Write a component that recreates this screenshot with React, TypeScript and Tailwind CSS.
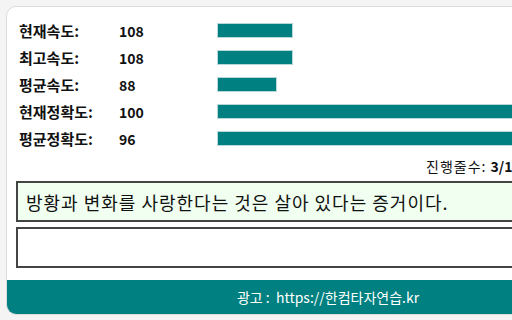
import React from "react";

const rows = [
  { label: "현재속도:", value: "108", w: 74 },
  { label: "최고속도:", value: "108", w: 74 },
  { label: "평균속도:", value: "88", w: 58 },
  { label: "현재정확도:", value: "100", w: 400 },
  { label: "평균정확도:", value: "96", w: 384 },
];

export default function App() {
  return (
    <div
      className="w-[512px] h-[320px] overflow-hidden bg-[#f4f4f4] pt-[6px] pl-[6px]"
      style={{ fontFamily: '"Noto Sans CJK KR", "Noto Sans", sans-serif' }}
    >
      <div className="w-[644px] bg-white border border-[#dcdcdc] rounded-[10px] overflow-hidden">
        <div className="px-[9px] pt-[10px]">
          <div className="flex flex-col pl-[3px]">
            {rows.map((r) => (
              <div key={r.label} className="h-[27px] flex items-center font-bold text-[#111]">
                <div className="w-[100px] leading-none text-[15px]">{r.label}</div>
                <div className="w-[99px] leading-none text-[14px]">{r.value}</div>
                <div
                  className="h-[13px] bg-[#008080] shadow-[0_0_0_1px_#b8d8d8]"
                  style={{ width: r.w }}
                />
              </div>
            ))}
          </div>
          <div className="flex h-[28px] items-center pl-[410px] text-[14px] text-[#111] leading-none whitespace-nowrap">
            <span className="tracking-[1px]">진행줄수:&nbsp;</span>
            <span className="font-bold">3/10</span>
          </div>
          <div className="h-[41px] mt-[1px] border-2 border-[#444] bg-[#f0fff0] flex items-center pl-[8px] text-[18px] tracking-[1px] text-[#111] leading-none whitespace-nowrap">
            방황과 변화를 사랑한다는 것은 살아 있다는 증거이다.
          </div>
          <div className="h-[41px] mt-[5px] border-2 border-[#444] bg-white" />
        </div>
        <div className="mt-[12px] h-[34px] bg-[#008080] flex items-center justify-center text-white text-[14px] leading-none">
          광고 :&nbsp;&nbsp;https://한컴타자연습.kr
        </div>
      </div>
    </div>
  );
}
